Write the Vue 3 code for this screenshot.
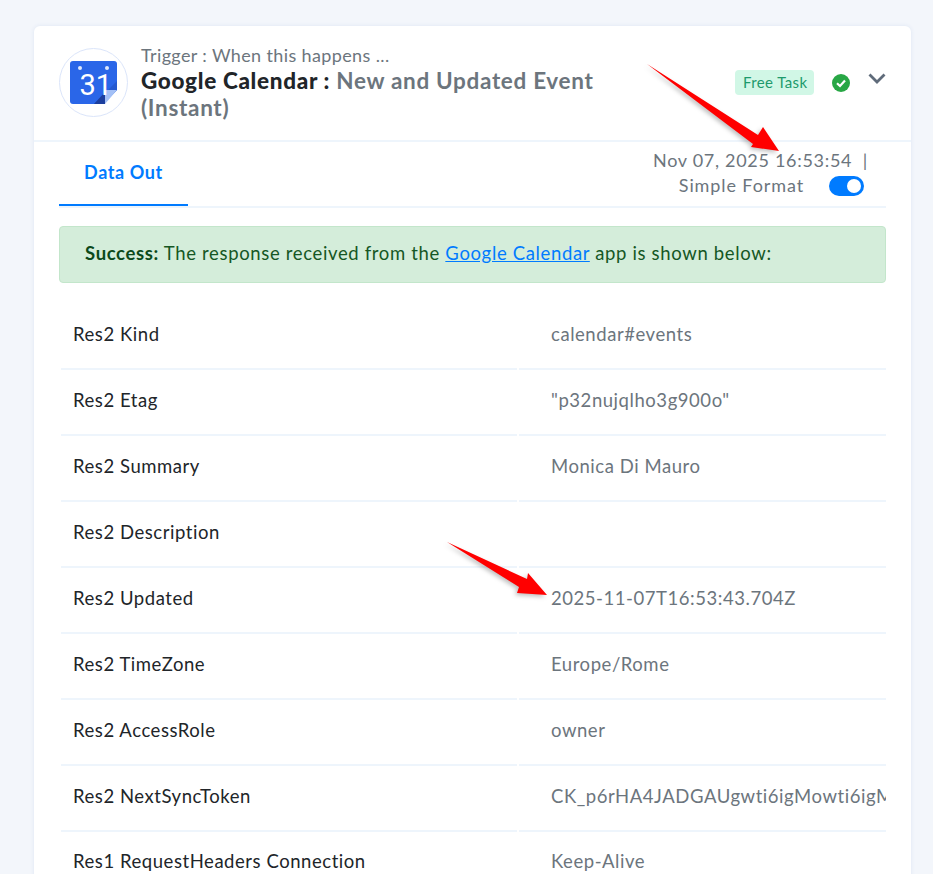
<script setup>
const rows = [
  ['Res2 Kind', 'calendar#events'],
  ['Res2 Etag', '"p32nujqlho3g900o"'],
  ['Res2 Summary', 'Monica Di Mauro'],
  ['Res2 Description', ''],
  ['Res2 Updated', '2025-11-07T16:53:43.704Z'],
  ['Res2 TimeZone', 'Europe/Rome'],
  ['Res2 AccessRole', 'owner'],
  ['Res2 NextSyncToken', 'CK_p6rHA4JADGAUgwti6igMowti6igMowti6igMowti6ig'],
  ['Res1 RequestHeaders Connection', 'Keep-Alive'],
]
</script>

<template>
  <div class="page">
    <div class="card">
      <header class="head">
        <div class="logo">
          <svg width="47" height="43" viewBox="0 0 47 43">
            <path d="M3 0H44a3 3 0 0 1 3 3V29L33 43H3a3 3 0 0 1-3-3V3a3 3 0 0 1 3-3Z" fill="#2a66e8" />
            <path d="M24 43 47 20V29L33 43Z" fill="#2559d0" />
            <path d="M24 43 35 31V43Z" fill="#1c3f9e" />
            <path d="M35 29H47L35 43Z" fill="#a3c0f6" />
            <circle cx="10" cy="7" r="2" fill="#dfe9fb" />
            <circle cx="37" cy="7" r="2" fill="#dfe9fb" />
            <text x="9.500" y="33.500" class="cal">31</text>
          </svg>
        </div>
        <div class="titles">
          <div class="sub">Trigger : When this happens ...</div>
          <div class="title"><b>Google Calendar :</b> New and Updated Event (Instant)</div>
        </div>
        <div class="status">
          <span class="badge">Free Task</span>
          <svg class="ok" width="18" height="18" viewBox="0 0 18 18">
            <circle cx="9" cy="9" r="9" fill="#28a745" />
            <path d="M5 9.200 8 12l5-5.500" fill="none" stroke="#fff" stroke-width="2.200" />
          </svg>
          <svg class="chev" width="18" height="11" viewBox="0 0 18 11">
            <path d="M1.500 1.500 9 9l7.500-7.500" fill="none" stroke="#5f6b7a" stroke-width="2.800" />
          </svg>
        </div>
      </header>
      <div class="body">
        <div class="tabs">
          <div class="tab">Data Out</div>
          <div class="meta">
            <div>Nov 07, 2025 16:53:54 &nbsp;|</div>
            <div class="fmt">
              <span>Simple Format</span>
              <span class="switch"><i></i></span>
            </div>
          </div>
        </div>
        <div class="alert">
          <b>Success:</b> The response received from the <a>Google Calendar</a> app is shown below:
        </div>
        <div class="table">
          <div v-for="r in rows" :key="r[0]" class="row">
            <div class="k">{{ r[0] }}</div>
            <div class="v">{{ r[1] }}</div>
          </div>
        </div>
      </div>
    </div>
    <svg class="arrow a1" width="140" height="95" viewBox="0 0 140 95">
      <path d="M2 1 113 72 118 64 134 88 106 84 108 81Z" fill="#f00" />
    </svg>
    <svg class="arrow a2" width="110" height="60" viewBox="0 0 110 60">
      <path d="M1 0 81 37 82 31 101 53 71 51 73 45Z" fill="#f00" />
    </svg>
  </div>
</template>

<style scoped>
.page {
  position: relative;
  width: 933px;
  height: 874px;
  overflow: hidden;
  background: #f3f6fb;
  font-family: "Lato", "Open Sans", sans-serif;
  color: #6c757d;
  font-size: 18.5px;
  letter-spacing: 0.55px;
}
.card {
  margin: 26px 0 0 34px;
  width: 877px;
  height: 900px;
  background: #fff;
  border-radius: 6px;
  box-shadow: 0 0 4px #dde5f3;
}
.head {
  display: flex;
  align-items: flex-start;
  height: 114px;
  padding: 0 25px;
  border-bottom: 2px solid #eef5fc;
}
.logo {
  flex: none;
  width: 69px;
  height: 69px;
  margin-top: 22px;
  border: 1px solid #dbe5fa;
  border-radius: 50%;
  display: flex;
  align-items: center;
  justify-content: center;
  box-sizing: border-box;
}
.cal {
  font: 400 29px "Roboto", sans-serif;
  letter-spacing: 0;
  fill: #fff;
}
.titles {
  width: 500px;
  margin: 17px 0 0 13px;
}
.sub {
  font-size: 18px;
  line-height: 24px;
  letter-spacing: 0.37px;
}
.title {
  font-size: 22.5px;
  font-weight: 700;
  line-height: 27px;
  letter-spacing: 0.68px;
}
.title b {
  color: #212529;
}
.status {
  margin-left: auto;
  display: flex;
  align-items: flex-start;
  padding-top: 44px;
}
.badge {
  background: #d1f7e6;
  color: #1d9a6c;
  font-size: 15px;
  letter-spacing: 0.4px;
  line-height: 25px;
  padding: 0 7px 0 8px;
  border-radius: 4px;
  margin-right: -1px;
  width: 64px;
  white-space: nowrap;
}
.ok {
  margin: 4px 0 0 19px;
}
.chev {
  margin: 3px 0 0 18px;
}
.body {
  padding: 0 25px;
}
.tabs {
  display: flex;
  justify-content: space-between;
  height: 64px;
  border-bottom: 2px solid #eef5fc;
}
.tab {
  width: 129px;
  height: 62px;
  border-bottom: 2px solid #007bff;
  color: #007bff;
  font-size: 18px;
  font-weight: 700;
  letter-spacing: 0.6px;
  text-align: center;
  line-height: 60px;
}
.meta {
  width: 240px;
  padding-right: 18px;
  padding-top: 6px;
  text-align: right;
  font-size: 18px;
  letter-spacing: 0.7px;
  line-height: 25px;
}
.fmt {
  display: flex;
  justify-content: flex-end;
  align-items: center;
  gap: 25px;
  margin-right: 4px;
  letter-spacing: 0.9px;
}
.switch {
  width: 35px;
  height: 20px;
  background: #007bff;
  border-radius: 10px;
  position: relative;
}
.switch i {
  position: absolute;
  right: 3px;
  top: 3px;
  width: 14px;
  height: 14px;
  border-radius: 50%;
  background: #fff;
}
.alert {
  margin-top: 18px;
  height: 57px;
  box-sizing: border-box;
  padding-left: 25px;
  line-height: 53px;
  letter-spacing: 0.65px;
  border: 1px solid #c3e6cb;
  border-radius: 4px;
  background: #d4edda;
  color: #155724;
}
.alert b {
  color: #0b4a1a;
}
.alert a {
  color: #007bff;
  text-decoration: underline;
}
.table {
  margin-top: 21px;
}
.row {
  display: grid;
  grid-template-columns: 456px 1fr;
  gap: 2px;
  margin-left: 2px;
  height: 66px;
}
.k,
.v {
  border-bottom: 2px solid #eef5fc;
  line-height: 60px;
  padding-left: 12px;
  white-space: nowrap;
  overflow: hidden;
  height: 66px;
  box-sizing: border-box;
}
.row:last-child .k,
.row:last-child .v {
  line-height: 58px;
}
.k {
  color: #212529;
}
.v {
  padding-left: 32px;
}
.arrow {
  position: absolute;
  filter: drop-shadow(-2px 2px 2px rgba(0, 0, 0, 0.25));
}
.a1 {
  left: 645px;
  top: 63px;
}
.a2 {
  left: 446px;
  top: 542px;
}
</style>
